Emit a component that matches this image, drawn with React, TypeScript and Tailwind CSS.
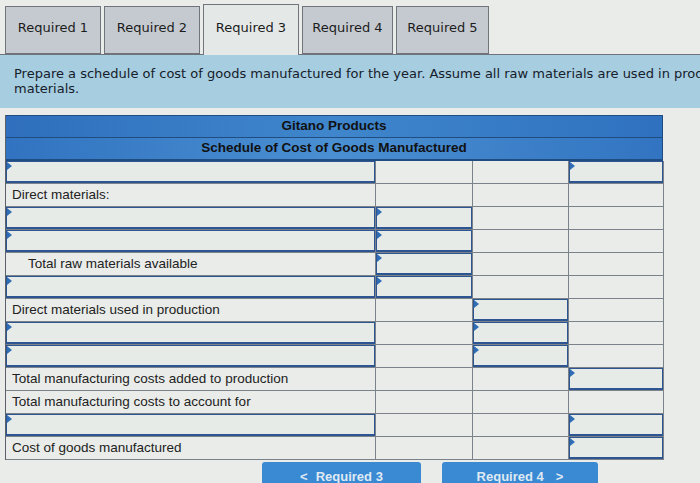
import React from 'react';

type Cell = 'input' | 'blank';

interface Row {
  label?: string;
  indent?: boolean;
  labelInput?: boolean;
  cols: [Cell, Cell, Cell];
}

const rows: Row[] = [
  { labelInput: true, cols: ['blank', 'blank', 'input'] },
  { label: 'Direct materials:', cols: ['blank', 'blank', 'blank'] },
  { labelInput: true, cols: ['input', 'blank', 'blank'] },
  { labelInput: true, cols: ['input', 'blank', 'blank'] },
  { label: 'Total raw materials available', indent: true, cols: ['input', 'blank', 'blank'] },
  { labelInput: true, cols: ['input', 'blank', 'blank'] },
  { label: 'Direct materials used in production', cols: ['blank', 'input', 'blank'] },
  { labelInput: true, cols: ['blank', 'input', 'blank'] },
  { labelInput: true, cols: ['blank', 'input', 'blank'] },
  { label: 'Total manufacturing costs added to production', cols: ['blank', 'blank', 'input'] },
  { label: 'Total manufacturing costs to account for', cols: ['blank', 'blank', 'blank'] },
  { labelInput: true, cols: ['blank', 'blank', 'input'] },
  { label: 'Cost of goods manufactured', cols: ['blank', 'blank', 'input'] },
];

const tabs = [
  { name: 'Required 1', w: 'w-[96px]' },
  { name: 'Required 2', w: 'w-[96px]' },
  { name: 'Required 3', w: 'w-[96px]', active: true },
  { name: 'Required 4', w: 'w-[91px]' },
  { name: 'Required 5', w: 'w-[93px]' },
];

// little blue marker shown in the corner of editable cells
const Marker = () => (
  <span className="absolute left-0 top-0 h-0 w-0 border-y-[4px] border-l-[5px] border-y-transparent border-l-[#2f6db5]" />
);

const InputCell = () => (
  <div className="relative h-full border border-b-2 border-[#2d5591] bg-[#e6ebe8]">
    <Marker />
  </div>
);

export default function App() {
  return (
    <div className="h-[483px] w-[700px] overflow-hidden bg-[#e9ece9] font-['DejaVu_Sans',sans-serif] text-[#1c1c1c]">
      {/* Tabs */}
      <div className="flex items-end gap-[3px] border-b border-[#6d7378] pl-[5px] pt-[4px]">
        {tabs.map((t) => (
          <div
            key={t.name}
            className={`${t.w} flex items-center justify-center border border-[#6f757b] text-[13px] ${
              t.active
                ? '-mb-px h-[51px] border-b-0 bg-[#e4e9e8] pb-[4px]'
                : 'h-[48px] bg-[#c4cad0] pb-[4px]'
            }`}
          >
            {t.name}
          </div>
        ))}
      </div>

      {/* Instructions */}
      <div className="h-[53px] overflow-hidden whitespace-nowrap bg-[#a6cde0] px-[14px] pt-[11px] text-[13px] leading-[15px] text-[#16202a]">
        Prepare a schedule of cost of goods manufactured for the year. Assume all raw materials are used in production as direct
        <br />
        materials.
      </div>

      {/* Schedule */}
      <div className="ml-[5px] mt-[7px] w-[658px] border-l border-[#5b6168] font-['Liberation_Sans',Arial,sans-serif] text-[13.5px]">
        <div className="flex h-[23px] items-center justify-center border border-l-0 border-[#1f4d82] bg-gradient-to-r from-[#2f6fbd] via-[#3f86cc] to-[#2f71bf] font-bold text-[#111]">
          Gitano Products
        </div>
        <div className="flex h-[23px] items-center justify-center border-b-2 border-r border-[#1f4d82] bg-gradient-to-r from-[#3173c0] via-[#4a8fd2] to-[#3274c1] font-bold text-[#111]">
          Schedule of Cost of Goods Manufactured
        </div>
        {rows.map((r, i) => (
          <div key={i} className="grid h-[23px] grid-cols-[370px_97px_96px_95px]">
            <div className="border-b border-r border-[#7c8289]">
              {r.labelInput ? (
                <InputCell />
              ) : (
                <div className={`flex h-full items-center text-[#222] ${r.indent ? 'pl-[22px]' : 'pl-[6px]'}`}>
                  {r.label}
                </div>
              )}
            </div>
            {r.cols.map((c, j) => (
              <div key={j} className="border-b border-r border-[#7c8289]">
                {c === 'input' ? <InputCell /> : null}
              </div>
            ))}
          </div>
        ))}
      </div>

      {/* Navigation */}
      <div className="mt-[2px] flex gap-[21px] pl-[262px] font-['Liberation_Sans',Arial,sans-serif]">
        <button className="flex h-[24px] w-[159px] items-center justify-center gap-2 rounded-t-[3px] bg-[#3a8ad3] pt-[6px] text-[13px] font-bold text-[#dfe9f3]">
          <span>&lt;</span>
          <span>Required 3</span>
        </button>
        <button className="flex h-[24px] w-[156px] items-center justify-center gap-3 rounded-t-[3px] bg-[#3a8ad3] pt-[6px] text-[13px] font-bold text-[#dfe9f3]">
          <span>Required 4</span>
          <span>&gt;</span>
        </button>
      </div>
    </div>
  );
}
